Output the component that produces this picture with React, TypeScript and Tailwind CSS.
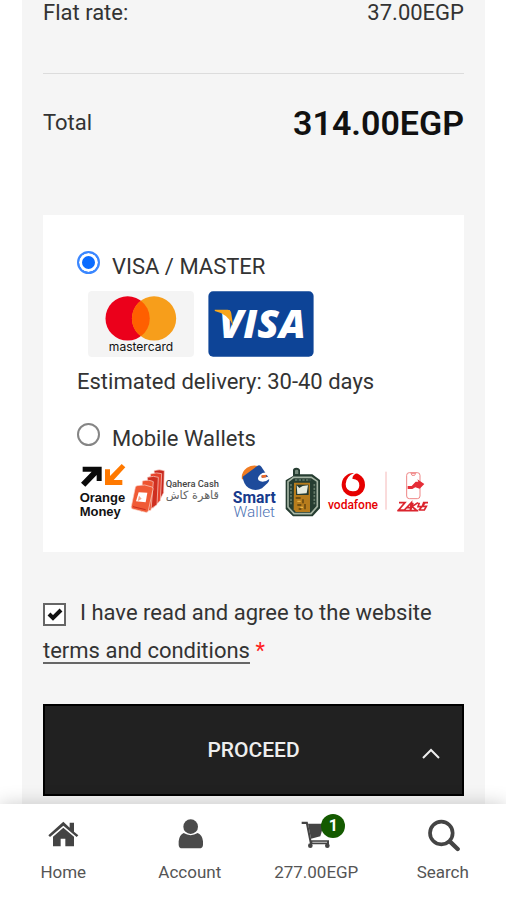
import React from "react";

const MastercardLogo: React.FC = () => (
  <svg viewBox="144 155 316 197" className="h-[66px] w-[106px]" role="img" aria-label="mastercard">
    <rect x="144" y="155" width="316" height="197" rx="12" fill="#f4f4f4" />
    <circle cx="262" cy="237" r="66" fill="#eb001b" />
    <circle cx="341" cy="237" r="66" fill="#f79e1b" />
    <path d="M301.500 184a66 66 0 0 1 0 106a66 66 0 0 1 0-106z" fill="#ff5f00" />
    <text x="302" y="335" fontSize="36" fontFamily="Inter, sans-serif" textAnchor="middle" fill="#111">
      mastercard
    </text>
  </svg>
);

const VisaLogo: React.FC = () => (
  <svg viewBox="506 155 316 197" className="h-[66px] w-[106px]" role="img" aria-label="VISA">
    <rect x="507" y="156" width="314" height="195" rx="14" fill="#0d4497" />
    <text
      x="668"
      y="296"
      fontSize="118"
      fontWeight="800"
      fontStyle="italic"
      fontFamily="'Open Sans', sans-serif"
      textAnchor="middle"
      fill="#fff"
    >
      VISA
    </text>
    <path d="M526 211h38q9 0 11 9l6 40q-14-36-55-45z" fill="#f7a61b" />
  </svg>
);

const OrangeMoneyLogo: React.FC = () => (
  <svg viewBox="21 27 156 168" className="h-14 w-[52px] shrink-0" role="img" aria-label="Orange Money">
    <path d="M38 38h57v43H80V63L46 98 33 86l32-33H38z" fill="#0a0a0a" />
    <path d="M105 46h15v20l35-36 11 10-35 38h26v15h-52z" fill="#ff7900" />
    <g fontSize="39" fontWeight="700" fontFamily="'Liberation Sans', sans-serif" fill="#111">
      <text x="29" y="144">Orange</text>
      <text x="29" y="186">Money</text>
    </g>
  </svg>
);

const QaheraCashLogo: React.FC = () => (
  <svg viewBox="177 27 288 168" className="h-14 w-24 shrink-0" role="img" aria-label="Qahera Cash">
    <g stroke="#fbd9d0" strokeWidth="2" strokeLinejoin="round">
      <path d="M252 50q16-5 31 0l-2 66-16 30z" fill="#c8281e" />
      <path d="M241 60q20-6 34-1l-4 80-22 24z" fill="#e6402a" />
      <path d="M232 70q20-6 33 0l-4 82-26 18z" fill="#cf2f20" />
      <path d="M217 81q20-5 33 2l-7 86-30 4z" fill="#ee5430" />
      <path d="M201 95q24-6 45 4q4 2 3 7l-14 64q-1 6-8 5l-39-10q-6-2-4-8l12-57q1-4 5-5z" fill="#f05a35" />
    </g>
    <path d="M206 115l26 1-5 29-29-3z" fill="#fff" />
    <path d="M203 142l4-17 8 9 8-4z" fill="#f5a58d" />
    <path d="M189 158l38 9" stroke="#c92d1d" strokeWidth="3" />
    <text x="287" y="100" fontSize="28" fontWeight="500" fill="#444">Qahera Cash</text>
    <text
      x="367"
      y="136"
      fontSize="34"
      textAnchor="middle"
      direction="rtl"
      fontFamily="'DejaVu Sans', sans-serif"
      fill="#666"
    >
      قاهرة كاش
    </text>
  </svg>
);

const SmartWalletLogo: React.FC = () => (
  <svg viewBox="0 27 168 168" className="h-14 w-14 shrink-0 overflow-visible" role="img" aria-label="Smart Wallet">
    <path d="M51 77q-4-22 15-36q22-13 44 0L82 50z" fill="#f07c22" />
    <path d="M53 68l45-33q5-3 11 3l22 33q4 9-3 16l-17 16q-20 10-40-1q-16-11-18-34z" fill="#1e4b9b" />
    <path d="M132 57q-17-5-27 5q-13 14 1 20q14 4 28-8l-4-6-19 3-2-6 21-3z" fill="#fff" />
    <path d="M110 64l14-2v8l-14 2z" fill="#ef6a28" />
    <text x="88" y="146" fontSize="47" fontWeight="700" textAnchor="middle" fill="#173a8c">Smart</text>
    <text x="88" y="190" fontSize="46" fontWeight="300" textAnchor="middle" fill="#4d72b4">Wallet</text>
  </svg>
);

const BadgeLogo: React.FC = () => (
  <svg viewBox="168 27 126 168" className="h-14 w-[42px] shrink-0" aria-hidden="true">
    <path d="M204 66V49q0-8 10-8t11 8v12h37l23 17v85l-22 24h-59l-22-22V79z" fill="#263d31" />
    <path d="M210 60V51q0-4 5-4t5 4v9z" fill="#778b7d" />
    <path d="M206 70h53l18 12v75l-19 22h-51l-18-20V83z" fill="none" stroke="#a6b5a5" strokeWidth="5" />
    <path d="M210 78h46M198 90v61M268 90v61" stroke="#657a68" strokeWidth="5" strokeDasharray="7 4" />
    <path d="M207 86h48v88h-43l-6-8z" fill="#b77c1c" />
    <path d="M213 92h38v31h-38z" fill="#273b31" />
    <path d="M215 94l8 8 10-6 16-2-4 24-28 2z" fill="#e6ebdf" />
    <path d="M212 132h15M234 136v12M217 153h12M240 150v16M221 165h8" stroke="#59400f" strokeWidth="4" />
    <path d="M217 142h10M226 160h8" stroke="#e6b445" strokeWidth="4" />
  </svg>
);

const VodafoneLogo: React.FC = () => (
  <svg viewBox="9 27 180 168" className="h-14 w-[60px] shrink-0" role="img" aria-label="vodafone">
    <circle cx="100" cy="92" r="35" fill="#e60000" />
    <path d="M111 58q-13 4-14 16q22 2 21 21q-2 18-20 17q-21-1-21-22q1-23 25-33z" fill="#fff" />
    <text x="99" y="164" fontSize="36" fontWeight="500" textAnchor="middle" fill="#e60000">vodafone</text>
  </svg>
);

const PhoneWalletLogo: React.FC = () => (
  <svg viewBox="189 27 141 168" className="h-14 w-[47px] shrink-0" aria-hidden="true">
    <path d="M198 53v114" stroke="#f5b8b8" strokeWidth="3" />
    <g fill="none" stroke="#ef8585" strokeWidth="3">
      <rect x="260" y="56" width="40" height="78" rx="8" />
      <path d="M273 58h14l-3 6h-8z" />
    </g>
    <path d="M263 96h12l12-13h8l-3-7 21 14-14 14-13-4-9 5h-14z" fill="#e52d37" />
    <path
      d="M237 146h18l-19 22h18M253 168l21-22-3 22M259 161h13M279 146l-7 22M294 146l-18 12 13 10M298 146l-4 12h12l9-12M305 158l-8 11M324 146h-13l-4 11h12l-6 11h-16M232 170h63"
      fill="none"
      stroke="#db252e"
      strokeWidth="5"
    />
  </svg>
);

const HomeIcon = (
  <svg viewBox="139 384 102 102" className="size-[34px]" fill="#444" aria-hidden="true">
    <path d="M191 395l19 18v-15h13v27l13 11-5 5-40-34-40 34-5-5z" />
    <path d="M191 413l32 27v29h-26v-23h-14v23h-23v-29z" />
  </svg>
);

const AccountIcon = (
  <svg viewBox="518 384 102 102" className="size-[34px]" fill="#4b4b4b" aria-hidden="true">
    <circle cx="571" cy="410" r="22" />
    <path d="M550 429q21 13 42 0q14 5 16 25v10q0 11-12 11h-50q-11 0-11-11v-10q2-20 15-25z" />
  </svg>
);

const CartIcon = (
  <svg viewBox="139 384 102 102" className="size-[34px]" fill="#444" aria-hidden="true">
    <path d="M147 395h18l11 56h53v12h-57l-12-61h-13z" />
    <path d="M166 401h48l-11 38-28 7z" />
    <path d="M179 455h44v4h-44z" fill="#aaa" />
    <circle cx="173" cy="467" r="7" />
    <circle cx="224" cy="467" r="7" />
  </svg>
);

const SearchIcon = (
  <svg viewBox="518 384 102 102" className="size-[34px]" fill="none" stroke="#444" aria-hidden="true">
    <circle cx="564" cy="429" r="34" strokeWidth="11" />
    <path d="M590 455l23 22" strokeWidth="13" strokeLinecap="round" />
  </svg>
);

const navItems = [
  { label: "Home", icon: HomeIcon },
  { label: "Account", icon: AccountIcon },
  { label: "277.00EGP", icon: CartIcon, count: 1 },
  { label: "Search", icon: SearchIcon },
];

const OrderTotals: React.FC = () => (
  <dl>
    <div className="flex h-[74px] items-start justify-between border-b border-[#dcdcdc]">
      <dt>Flat rate:</dt>
      <dd>37.00EGP</dd>
    </div>
    <div className="flex h-[98px] items-center justify-between">
      <dt>Total</dt>
      <dd className="text-[34px] font-semibold text-[#111]">314.00EGP</dd>
    </div>
  </dl>
);

interface PaymentOptionProps {
  id: string;
  label: string;
  checked: boolean;
  onSelect: (id: string) => void;
}

const PaymentOption: React.FC<PaymentOptionProps> = ({ id, label, checked, onSelect }) => (
  <div className="flex items-start gap-3">
    <input
      type="radio"
      id={id}
      name="payment"
      checked={checked}
      onChange={() => onSelect(id)}
      className="size-[23px] appearance-none rounded-full border-2 border-[#858585] bg-white checked:border-[#3b87ff] checked:bg-[#0b6cff] checked:shadow-[inset_0_0_0_3px_white]"
    />
    <label htmlFor={id} className="pt-1 leading-6">
      {label}
    </label>
  </div>
);

const PaymentMethods: React.FC = () => {
  const [method, setMethod] = React.useState("card");
  return (
    <div role="radiogroup" aria-label="Payment method" className="mt-[43px] bg-white px-[34px] pt-9 pb-[33px]">
      <PaymentOption id="card" label="VISA / MASTER" checked={method === "card"} onSelect={setMethod} />
      <div className="mt-3 ml-[11px] flex gap-[14px]">
        <MastercardLogo />
        <VisaLogo />
      </div>
      <p className="mt-[13px] leading-6">Estimated delivery: 30-40 days</p>
      <div className="mt-[29px]">
        <PaymentOption id="wallet" label="Mobile Wallets" checked={method === "wallet"} onSelect={setMethod} />
      </div>
      <div className="mt-3 flex">
        <OrangeMoneyLogo />
        <QaheraCashLogo />
        <SmartWalletLogo />
        <BadgeLogo />
        <VodafoneLogo />
        <PhoneWalletLogo />
      </div>
    </div>
  );
};

const Terms: React.FC = () => {
  const [accepted, setAccepted] = React.useState(true);
  return (
    <div className="mt-[42px] leading-[38px]">
      <span className="relative mr-[14px] inline-block size-[23px] align-middle">
        <input
          type="checkbox"
          id="terms"
          checked={accepted}
          onChange={() => setAccepted(!accepted)}
          className="block size-full appearance-none border-2 border-[#666] bg-white"
        />
        {accepted && (
          <svg viewBox="0 0 23 23" className="pointer-events-none absolute inset-0" fill="none" aria-hidden="true">
            <path d="M6 11l4 4 8-8" stroke="#111" strokeWidth="4" />
          </svg>
        )}
      </span>
      <label htmlFor="terms">
        I have read and agree to the website{" "}
        <a href="#terms" className="underline decoration-[#666] decoration-2 underline-offset-4">
          terms and conditions
        </a>{" "}
        <span className="text-[#ff2020]">*</span>
      </label>
    </div>
  );
};

const BottomNav: React.FC = () => (
  <nav className="sticky bottom-0 grid h-24 grid-cols-4 bg-white shadow-[0_0_18px_rgba(0,0,0,0.2)]">
    {navItems.map((item) => (
      <a
        key={item.label}
        href={`#${item.label.toLowerCase()}`}
        className="flex flex-col items-center gap-2 pt-[14px] text-[17px] leading-6 text-[#555]"
      >
        <span className="relative">
          {item.icon}
          {item.count && (
            <span className="absolute -top-1 -right-3 flex size-6 items-center justify-center rounded-full bg-[#145a00] text-base font-bold text-white">
              {item.count}
            </span>
          )}
        </span>
        {item.label}
      </a>
    ))}
  </nav>
);

const App: React.FC = () => {
  return (
    <div className="flex min-h-screen flex-col bg-white font-[Roboto,sans-serif] text-[22px] leading-[26px] text-[#333]">
      <main className="mr-[21px] ml-[22px] grow bg-[#f5f5f5] px-[21px] pb-2">
        <OrderTotals />
        <PaymentMethods />
        <Terms />
        <button
          type="button"
          className="relative mt-[34px] flex h-[92px] w-full items-center justify-center border-2 border-black bg-[#212121] text-[21px] font-medium text-[#eee]"
        >
          PROCEED
          <svg
            viewBox="0 0 20 14"
            className="absolute right-[21px] bottom-[34px] h-[14px] w-5"
            fill="none"
            stroke="currentColor"
            strokeWidth="2"
            aria-hidden="true"
          >
            <path d="M2 12l8-8 8 8" />
          </svg>
        </button>
      </main>
      <BottomNav />
    </div>
  );
};

export default App;
